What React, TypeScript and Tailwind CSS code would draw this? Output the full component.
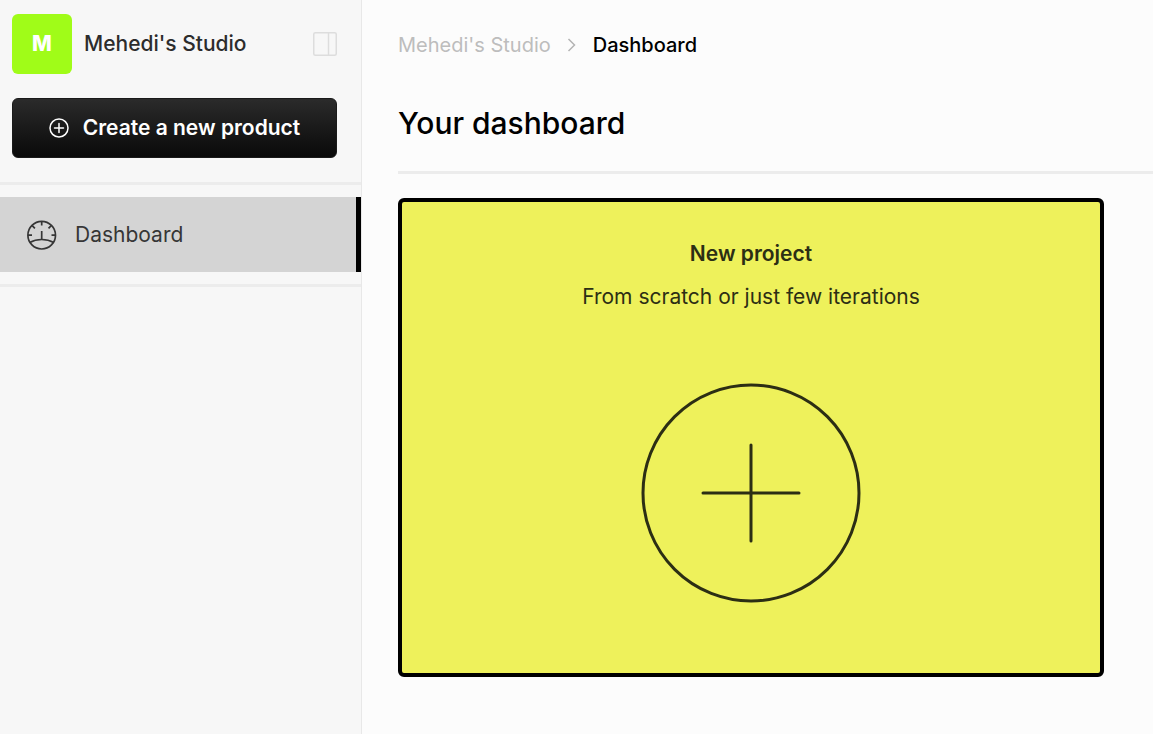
function PanelIcon() {
  return (
    <svg viewBox="0 0 24 24" className="size-6" fill="none" stroke="currentColor" strokeWidth="1.5">
      <rect x="0.75" y="0.75" width="22.5" height="22.5" rx="1.5" />
      <path d="M15.5 1v22" />
    </svg>
  );
}

function PlusCircleIcon() {
  return (
    <svg viewBox="0 0 20 20" className="size-5" fill="none" stroke="currentColor" strokeWidth="1.5" strokeLinecap="round">
      <circle cx="10" cy="10" r="9" />
      <path d="M10 5.5v9M5.5 10h9" />
    </svg>
  );
}

function GaugeIcon() {
  return (
    <svg viewBox="0 0 30 30" className="size-[30px]" fill="none" stroke="currentColor" strokeWidth="1.7">
      <circle cx="14.7" cy="15.2" r="13.8" />
      <path d="M14.700 1.500v4M1 15.200h4M28.500 15.200h-4M5.200 5.700l2.700 2.700M24.200 5.700l-2.700 2.700M14.700 11v8.500" />
      <path d="M2.700 22.500c3.500-2 7.500-3 12-3s8.500 1 12 3" />
    </svg>
  );
}

function Sidebar() {
  return (
    <aside className="w-[362px] shrink-0 border-r border-[#e8e8e8] bg-[#f7f7f7]">
      <div className="pt-3.5 pr-6 pb-6 pl-3">
        <div className="flex items-center">
          <span className="flex size-[60px] items-center justify-center rounded-md bg-[#a0fc18] text-[21px] font-extrabold text-white">
            M
          </span>
          <span className="ml-3 flex-1 text-[21px] font-medium text-[#2c2c2c]">Mehedi's Studio</span>
          <button type="button" aria-label="Toggle sidebar" className="text-[#dddddd]">
            <PanelIcon />
          </button>
        </div>
        <button
          type="button"
          className="mt-6 flex h-[60px] w-full items-center justify-center gap-3.5 rounded-md border border-[#1a1a1a] bg-linear-to-b from-[#2b2b2b] to-[#0a0a0a] text-[21px] font-semibold text-white"
        >
          <PlusCircleIcon />
          Create a new product
        </button>
      </div>
      <nav className="border-y-3 border-[#ececec] py-3">
        <a
          href="#dashboard"
          aria-current="page"
          className="flex h-[75px] items-center gap-[18px] border-r-5 border-black bg-[#d4d4d4] pl-[27px] text-[21px] text-[#363636]"
        >
          <GaugeIcon />
          Dashboard
        </a>
      </nav>
    </aside>
  );
}

function NewProjectCard() {
  return (
    <button
      type="button"
      className="mt-6 flex w-full max-w-[706px] flex-col items-center rounded-md border-4 border-black bg-[#eef15b] pt-9 pb-[70px] text-[21px] text-[#2c2e14]"
    >
      <span className="leading-8 font-semibold">New project</span>
      <span className="mt-[11px] leading-8">From scratch or just few iterations</span>
      <svg
        viewBox="0 0 220 220"
        className="mt-[70px] size-[220px]"
        fill="none"
        stroke="currentColor"
        strokeWidth="3"
        strokeLinecap="round"
      >
        <circle cx="110" cy="110" r="108" />
        <path d="M110 62v96M62 110h96" />
      </svg>
    </button>
  );
}

export default function App() {
  return (
    <div className="flex min-h-screen bg-[#fcfcfc] font-['Inter',sans-serif]">
      <Sidebar />
      <main className="flex-1 pt-[30px] pl-9">
        <nav aria-label="Breadcrumb" className="flex items-center text-[20px] leading-[30px]">
          <a href="#studio" className="text-[#bdbdbd]">
            Mehedi's Studio
          </a>
          <svg viewBox="0 0 10 16" className="mx-4 h-4 w-2.5" fill="none" stroke="#b4b4b4" strokeWidth="1.5">
            <path d="M1.500 2l6 6-6 6" />
          </svg>
          <span aria-current="page" className="font-medium text-black">
            Dashboard
          </span>
        </nav>
        <h1 className="mt-[43px] border-b-3 border-[#ececec] pb-7 text-[30px] leading-10 font-medium text-black">
          Your dashboard
        </h1>
        <NewProjectCard />
      </main>
    </div>
  );
}
